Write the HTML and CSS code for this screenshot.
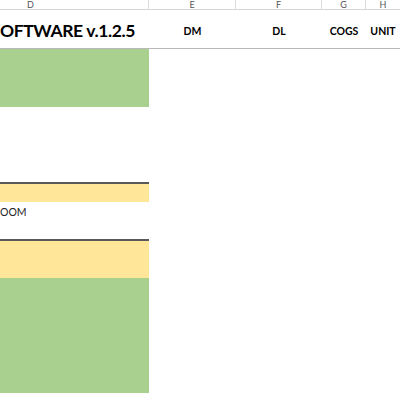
FILE: index.html
```html
<!DOCTYPE html>
<html>
<head>
<meta charset="utf-8">
<link rel="stylesheet" href="styles.css">
</head>
<body>
<div class="sheet">
  <div class="cols">
    <div class="col col-d">D</div>
    <div class="col col-e">E</div>
    <div class="col col-f">F</div>
    <div class="col col-g">G</div>
    <div class="col col-h">H</div>
  </div>
  <div class="title-row">
    <div class="title">OFTWARE v.1.2.5</div>
    <div class="head">DM</div>
    <div class="head">DL</div>
    <div class="head">COGS</div>
    <div class="head">UNIT</div>
  </div>
  <div class="block green g1"></div>
  <div class="block blank b1"></div>
  <div class="block yellow y1"></div>
  <div class="block blank b2"><span class="cell-text">OOM</span></div>
  <div class="block yellow y2"></div>
  <div class="block green g2"></div>
</div>
</body>
</html>
```
FILE: styles.css
```css
html, body {
  margin: 0;
  padding: 0;
  background: #ffffff;
  overflow: hidden;
}

.sheet {
  width: 400px;
  height: 400px;
  font-family: Lato, "Open Sans", "Liberation Sans", sans-serif;
}

.cols {
  display: grid;
  grid-template-columns: 149px 87px 86px 44px 1fr;
  height: 9px;
  border-bottom: 1px solid #d6d6d6;
  background: #ffffff;
}

.col {
  font-size: 9px;
  line-height: 9px;
  color: #555;
  text-align: center;
  border-right: 1px solid #dcdcdc;
}

.col-d {
  text-align: left;
  padding-left: 27px;
}

.col-h {
  border-right: none;
}

.title-row {
  display: grid;
  grid-template-columns: 149px 87px 86px 44px 1fr;
  height: 38px;
  border-bottom: 1px solid #b8b8b8;
  align-items: center;
}

.title {
  font-weight: 700;
  font-size: 17.5px;
  letter-spacing: -0.4px;
  white-space: nowrap;
  padding-top: 2px;
}

.head {
  font-weight: 700;
  font-size: 10.5px;
  text-align: center;
  padding-top: 3px;
}

.block {
  width: 149px;
  box-sizing: border-box;
}

.green { background: #a9d08e; }
.yellow { background: #ffe699; }

.g1 { height: 58px; }
.b1 { height: 75px; }
.y1 { height: 20px; border-top: 2px solid #595959; }
.b2 { height: 37px; }
.y2 { height: 39px; border-top: 2px solid #595959; }
.g2 { height: 115px; }

.cell-text {
  display: block;
  font-size: 10.5px;
  line-height: 20px;
  color: #222;
}
```
